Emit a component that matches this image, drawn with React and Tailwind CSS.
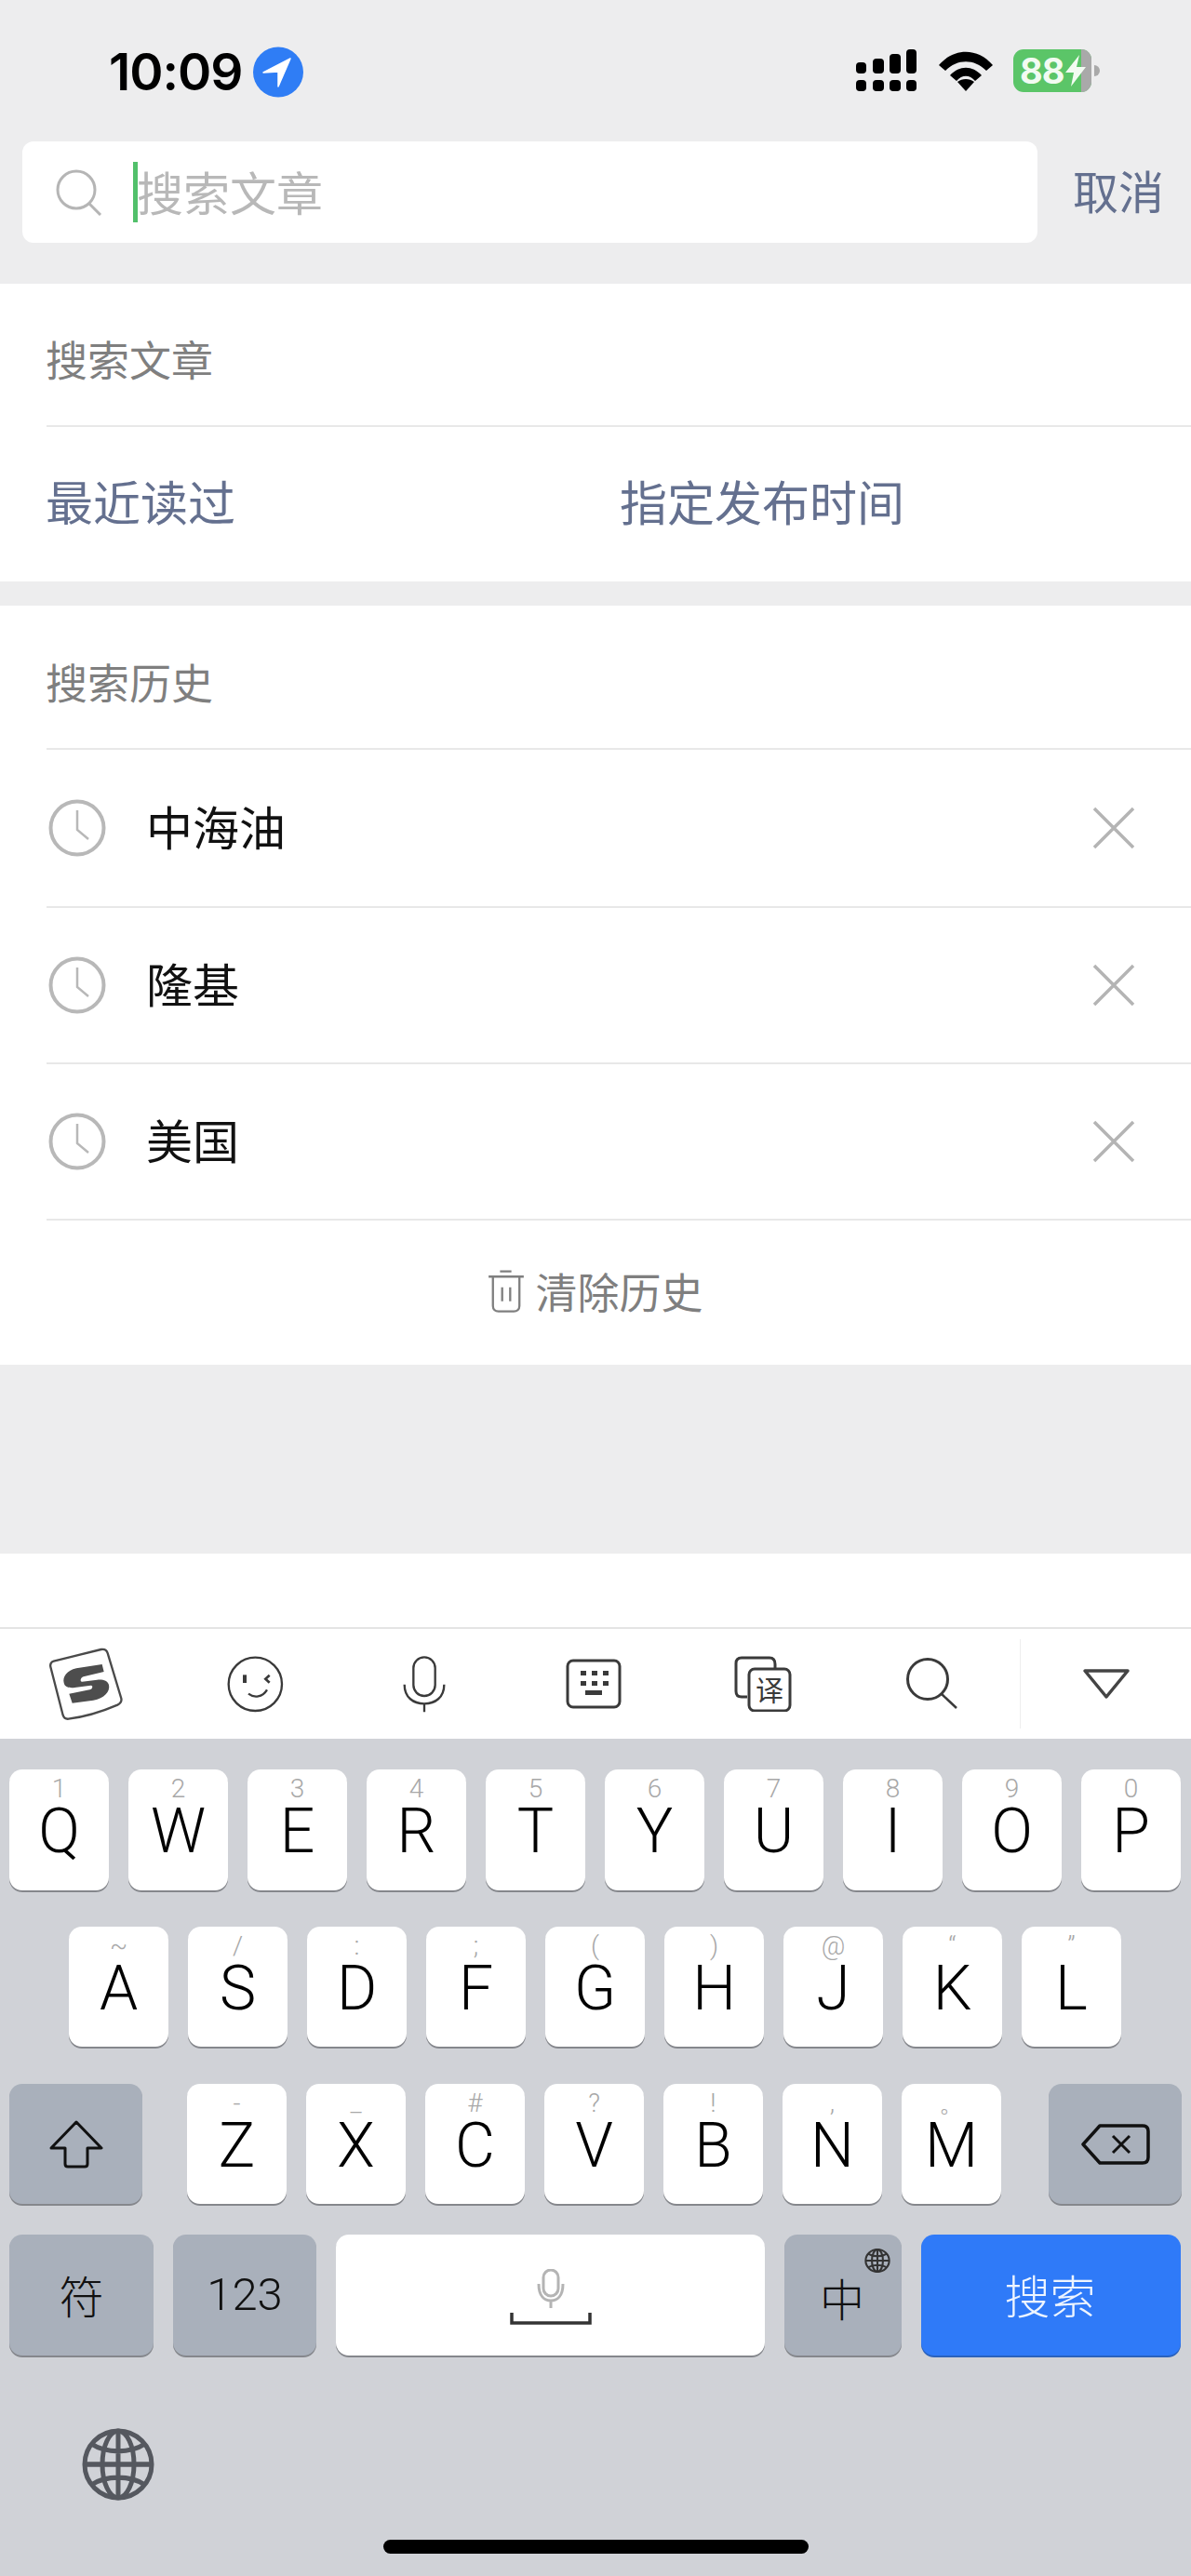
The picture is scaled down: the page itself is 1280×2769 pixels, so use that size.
import React from "react";

const rowOne = [["Q", "1"], ["W", "2"], ["E", "3"], ["R", "4"], ["T", "5"], ["Y", "6"], ["U", "7"], ["I", "8"], ["O", "9"], ["P", "0"]];
const rowTwo = [["A", "~"], ["S", "/"], ["D", ":"], ["F", ";"], ["G", "("], ["H", ")"], ["J", "@"], ["K", "“"], ["L", "”"]];
const rowThree = [["Z", "-"], ["X", "_"], ["C", "#"], ["V", "?"], ["B", "!"], ["N", ","], ["M", "。"]];
const history = ["中海油", "隆基", "美国"];

function Key({ letter, sub }) {
  return (
    <div className="w-[107px] h-full flex flex-col items-center bg-white rounded-[14px] shadow-[0_2px_0_#85878c] font-['Roboto',sans-serif] text-black">
      <div className="h-[42px] leading-[42px] text-[28px] font-light text-[#a8a8a8]">{sub}</div>
      <div className="h-[50px] leading-[50px] text-[66px] font-light">{letter}</div>
    </div>
  );
}

function Clock() {
  return (
    <svg width="62" height="62" viewBox="0 0 62 62" fill="none" stroke="#b8b8b8" strokeWidth="4">
      <circle cx="31" cy="31" r="28.5" />
      <path d="M31 12V33L43 43" strokeWidth="2.5" />
    </svg>
  );
}

function Close() {
  return (
    <svg width="46" height="46" viewBox="0 0 46 46" fill="none" stroke="#b4b4b4" strokeWidth="3.5">
      <path d="M2 2L44 44M44 2L2 44" />
    </svg>
  );
}

function StatusIcons() {
  return (
    <div className="flex items-start ml-auto mr-[98px]">
      <svg width="66" height="46" viewBox="0 0 66 46" fill="#000" className="mt-[-2px]">
        <rect x="0" y="14" width="11" height="12" rx="4" />
        <rect x="18" y="10" width="12" height="16" rx="4" />
        <rect x="36" y="5" width="12" height="21" rx="4" />
        <rect x="54" y="0" width="11" height="26" rx="4" />
        <rect x="0" y="33" width="11" height="12" rx="4" />
        <rect x="18" y="33" width="12" height="12" rx="4" />
        <rect x="36" y="33" width="12" height="12" rx="4" />
        <rect x="54" y="33" width="11" height="12" rx="4" />
      </svg>
      <svg width="58" height="44" viewBox="0 0 58 44" fill="#000" className="ml-[23px]">
        <path d="M0 15C16 -4 42 -4 58 15L51 21C38 8 20 8 7 21Z" />
        <path d="M12 26C22 15 36 15 46 26L39 32C33 25 25 25 19 32Z" />
        <path d="M29 43L20 33C25 29 33 29 38 33Z" />
      </svg>
      <div className="relative w-[84px] h-[46px] ml-[22px] mt-[-2px] rounded-[11px] bg-[#5bc568] overflow-hidden">
        <div className="absolute right-0 top-0 bottom-0 w-[11px] bg-[#a9a9a9]" />
        <div className="absolute left-[7px] top-0 text-[38px] leading-[46px] font-bold text-[#f2fbf2] font-['Inter',sans-serif] tracking-[-1px]">88</div>
        <svg width="26" height="34" viewBox="0 0 26 34" fill="#f2fbf2" className="absolute left-[54px] top-[6px]">
          <path d="M17 0L2 19H11L8 34L24 13H14Z" />
        </svg>
      </div>
      <div className="w-[6px] h-[12px] mt-[15px] ml-[3px] rounded-r-full bg-[#a9a9a9]" />
    </div>
  );
}

function Toolbar() {
  return (
    <div className="h-[120px] flex items-center pl-[1px] bg-white border-t-2 border-[#e4e4e4]">
      <div className="w-[182px] flex justify-center">
        <svg width="80" height="80" viewBox="155 55 240 240" fill="none">
          <path d="M172 102L325 64C335 62 343 66 346 76L390 222C392 232 388 238 378 243C320 268 270 282 220 288C210 289 205 285 202 276L162 120C160 112 164 104 172 102Z" stroke="#4a4a4a" strokeWidth="7" />
          <path d="M328 112L245 125C215 132 200 152 205 172C208 186 222 189 240 187L292 180C300 179 298 192 288 194L222 207L232 237L300 228C335 222 355 200 350 178C346 164 330 160 312 162L264 168C256 169 258 155 268 152L334 136Z" fill="#4d4d4d" />
        </svg>
      </div>
      <div className="w-[182px] flex justify-center">
        <svg width="65" height="65" viewBox="725 80 195 195" fill="none" stroke="#3a3a3a" strokeWidth="7">
          <circle cx="822" cy="177" r="86" />
          <path d="M788 147V173" strokeWidth="12" />
          <path d="M868 148L855 160L868 172" strokeWidth="8" />
          <path d="M800 208C818 222 845 220 860 195" />
        </svg>
      </div>
      <div className="w-[182px] flex justify-center">
        <svg width="50" height="65" viewBox="1295 80 150 195" fill="none" stroke="#3a3a3a" strokeWidth="7">
          <rect x="1335" y="90" width="70" height="125" rx="35" />
          <path d="M1306 178C1306 220 1335 240 1370 240C1405 240 1434 220 1434 178M1370 240V267" />
        </svg>
      </div>
      <div className="w-[182px] flex justify-center">
        <svg width="60" height="54" viewBox="0 0 60 54" fill="#3a3a3a">
          <rect x="2" y="2" width="56" height="50" rx="6" fill="none" stroke="#3a3a3a" strokeWidth="3" />
          <rect x="16" y="13" width="6" height="5" />
          <rect x="28" y="13" width="6" height="5" />
          <rect x="40" y="13" width="6" height="5" />
          <rect x="16" y="24" width="6" height="5" />
          <rect x="28" y="24" width="6" height="5" />
          <rect x="40" y="24" width="6" height="5" />
          <rect x="21" y="34" width="18" height="5" />
        </svg>
      </div>
      <div className="w-[182px] flex justify-center">
        <svg width="62" height="60" viewBox="0 0 62 60" fill="none" stroke="#3a3a3a" strokeWidth="3">
          <path d="M14 44H8C4 44 2 42 2 38V8C2 4 4 2 8 2H38C42 2 44 4 44 9V13" />
          <rect x="16" y="14" width="44" height="45" rx="6" />
          <text x="38" y="48" textAnchor="middle" fontSize="30" fill="#3a3a3a" stroke="none">译</text>
        </svg>
      </div>
      <div className="w-[182px] flex justify-center">
        <svg width="58" height="58" viewBox="0 0 58 58" fill="none" stroke="#3a3a3a" strokeWidth="3">
          <circle cx="24" cy="24" r="21.5" />
          <path d="M39 40L55 55" strokeWidth="2.5" />
        </svg>
      </div>
      <div className="w-[1px] h-[96px] ml-[3px] bg-[#eeeeee]" />
      <div className="flex-1 flex justify-center">
        <svg width="54" height="34" viewBox="0 0 54 34" fill="none" stroke="#444" strokeWidth="3.5" strokeLinejoin="round">
          <path d="M4 3H50L27 31Z" />
        </svg>
      </div>
    </div>
  );
}

export default function App() {
  return (
    <div className="w-[1280px] h-[2769px] overflow-hidden bg-[#ededee] font-['Noto_Sans_CJK_SC',sans-serif]">
      <div className="h-[152px] flex items-center pl-[117px] pt-[2px]">
        <span className="text-[55px] leading-none font-semibold tracking-[-1px] text-black font-['Inter',sans-serif]">10:09</span>
        <svg width="54" height="55" viewBox="0 0 54 55" className="ml-[11px]">
          <circle cx="27" cy="27.5" r="27" fill="#2f7df5" />
          <path d="M40 13L11 28L27 27V43Z" fill="#fff" stroke="#fff" strokeWidth="1.5" strokeLinejoin="round" />
        </svg>
        <StatusIcons />
      </div>

      <div className="h-[153px] flex items-start pl-[24px]">
        <div className="w-[1091px] h-[109px] flex items-center pl-[36px] bg-white rounded-[12px]">
          <svg width="50" height="50" viewBox="0 0 50 50" fill="none" stroke="#b5b5b5" strokeWidth="3">
            <circle cx="22" cy="22" r="20" />
            <path d="M36 37L48 49" />
          </svg>
          <div className="w-[5px] h-[65px] ml-[33px] bg-[#52c06b]" />
          <span className="ml-[-1px] mb-[3px] text-[50px] text-[#b8b8b8]">搜索文章</span>
        </div>
        <span className="ml-[38px] mt-[17px] text-[49px] leading-[70px] text-[#64708f]">取消</span>
      </div>

      <div className="h-[320px] bg-white">
        <div className="h-[154px] ml-[50px] pt-[10px] flex items-center border-b-2 border-[#e8e8e8] text-[45px] text-[#7f7f7f]">
          <span className="ml-[-1px]">搜索文章</span>
        </div>
        <div className="h-[164px] flex items-center pl-[49px] pb-[5px] text-[51px] text-[#64708f]">
          <span className="w-[617px]">最近读过</span>
          <span>指定发布时间</span>
        </div>
      </div>

      <div className="h-[816px] mt-[26px] bg-white">
        <div className="h-[155px] ml-[50px] pt-[10px] flex items-center border-b-2 border-[#e8e8e8] text-[45px] text-[#7f7f7f]">
          <span className="ml-[-1px]">搜索历史</span>
        </div>
        {history.map((item, i) => (
          <div key={item} className={i === 0 ? "h-[170px] ml-[50px] flex items-center pr-[60px] border-b-2 border-[#e8e8e8]" : "h-[168px] ml-[50px] flex items-center pr-[60px] border-b-2 border-[#e8e8e8]"}>
            <div className="ml-[2px]"><Clock /></div>
            <span className="ml-[43px] mb-[5px] text-[50px] text-[#111]">{item}</span>
            <div className="ml-auto"><Close /></div>
          </div>
        ))}
        <div className="h-[155px] flex items-center justify-center pb-[3px]">
          <svg width="40" height="48" viewBox="75 100 120 145" fill="none" stroke="#7f7f7f" strokeWidth="7">
            <path d="M78 125H192M115 108H152M92 125V220C92 232 100 238 110 238H160C170 238 178 232 178 220V125M122 160V205M148 160V205" />
          </svg>
          <span className="ml-[11px] text-[45px] text-[#7f7f7f]">清除历史</span>
        </div>
      </div>

      <div className="h-[203px]" />
      <div className="h-[79px] bg-white" />
      <Toolbar />

      <div className="h-[900px] pt-[33px] bg-[#d0d2d7]">
        <div className="h-[130px] flex gap-[21px] pl-[10px]">
          {rowOne.map(([letter, sub]) => <Key key={letter} letter={letter} sub={sub} />)}
        </div>
        <div className="h-[129px] mt-[39px] flex gap-[21px] pl-[74px]">
          {rowTwo.map(([letter, sub]) => <Key key={letter} letter={letter} sub={sub} />)}
        </div>
        <div className="h-[129px] mt-[40px] flex gap-[21px] pl-[10px]">
          <div className="w-[143px] mr-[27px] flex items-center justify-center bg-[#a9b0bb] rounded-[14px] shadow-[0_2px_0_#85878c]">
            <svg width="58" height="52" viewBox="0 0 58 52" fill="none" stroke="#111" strokeWidth="3" strokeLinejoin="round">
              <path d="M29 2L56 30H41V47C41 49 40 50 38 50H20C18 50 17 49 17 47V30H2Z" />
            </svg>
          </div>
          {rowThree.map(([letter, sub]) => <Key key={letter} letter={letter} sub={sub} />)}
          <div className="w-[143px] ml-[30px] flex items-center justify-center bg-[#a9b0bb] rounded-[14px] shadow-[0_2px_0_#85878c]">
            <svg width="74" height="46" viewBox="0 0 74 44" fill="none" stroke="#111" strokeWidth="3.5" strokeLinejoin="round">
              <path d="M20 2H66C70 2 72 4 72 8V36C72 40 70 42 66 42H20L2 22Z" />
              <path d="M34 13L52 31M52 13L34 31" strokeWidth="3" />
            </svg>
          </div>
        </div>
        <div className="h-[130px] mt-[33px] flex gap-[21px] pl-[10px]">
          <div className="w-[155px] flex items-center justify-center bg-[#a9b0bb] rounded-[14px] shadow-[0_2px_0_#85878c] text-[48px] font-light text-[#111] pb-[2px]">符</div>
          <div className="w-[154px] flex items-center justify-center bg-[#a9b0bb] rounded-[14px] shadow-[0_2px_0_#85878c] text-[49px] font-light font-['Roboto',sans-serif] text-[#111]">123</div>
          <div className="w-[461px] flex items-center justify-center bg-white rounded-[14px] shadow-[0_2px_0_#85878c]">
            <svg width="88" height="60" viewBox="0 0 88 60" fill="none" className="mt-[4px]">
              <rect x="36" y="1" width="16" height="28" rx="8" stroke="#b4b4b4" strokeWidth="3" />
              <path d="M31 16C31 29 37 34 44 34C51 34 57 29 57 16M44 34V42" stroke="#b4b4b4" strokeWidth="3" />
              <path d="M2 47V58H86V47" stroke="#333" strokeWidth="3.5" />
            </svg>
          </div>
          <div className="relative w-[126px] flex items-center justify-center bg-[#a9b0bb] rounded-[14px] shadow-[0_2px_0_#85878c] text-[48px] font-light text-[#111] pr-[2px] pt-[3px]">
            中
            <svg width="28" height="26" viewBox="0 0 78 74" fill="none" stroke="#333" strokeWidth="6" className="absolute right-[12px] top-[15px]">
              <ellipse cx="39" cy="37" rx="36" ry="34" />
              <ellipse cx="39" cy="37" rx="17" ry="34" />
              <path d="M3 37H75M10 16C26 26 52 26 68 16M10 58C26 48 52 48 68 58M39 3V71" />
            </svg>
          </div>
          <div className="w-[279px] flex items-center justify-center bg-[#2f7af8] rounded-[14px] shadow-[0_2px_0_#2a62bd] text-[49px] font-light text-[#eef5ff] pb-[2px] pr-[2px]">搜索</div>
        </div>

        <div className="h-[78px] mt-[78px] pl-[88px]">
          <svg width="78" height="78" viewBox="0 0 78 74" preserveAspectRatio="none" fill="none" stroke="#55585f" strokeWidth="5">
            <ellipse cx="39" cy="37" rx="36" ry="34" />
            <ellipse cx="39" cy="37" rx="17" ry="34" />
            <path d="M3 37H75M10 16C26 26 52 26 68 16M10 58C26 48 52 48 68 58M39 3V71" />
          </svg>
        </div>
        <div className="w-[457px] h-[15px] mt-[42px] ml-[412px] rounded-full bg-black" />
      </div>
    </div>
  );
}
